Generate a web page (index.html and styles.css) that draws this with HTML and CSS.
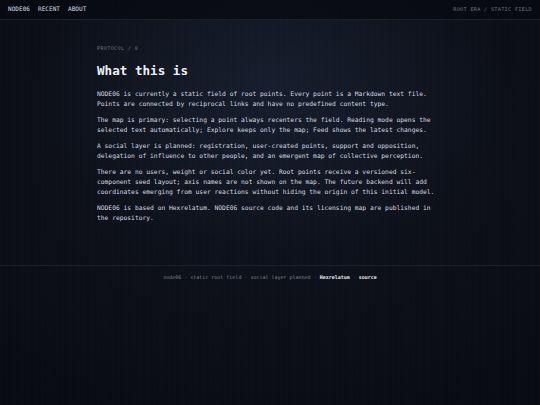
FILE: index.html
```html
<!DOCTYPE html>
<html lang="en">
<head>
<meta charset="utf-8">
<title>NODE06 — What this is</title>
<link rel="stylesheet" href="styles.css">
</head>
<body>
<header class="topbar">
  <nav class="nav">
    <a class="nav-link" href="#">NODE06</a>
    <a class="nav-link" href="#">RECENT</a>
    <a class="nav-link" href="#">ABOUT</a>
  </nav>
  <div class="era">ROOT ERA / STATIC FIELD</div>
</header>
<main class="main">
  <article class="doc">
    <div class="kicker">PROTOCOL / 0</div>
    <h1 class="title">What this is</h1>
    <p class="para">NODE06 is currently a static field of root points. Every point is a Markdown text file. Points are connected by reciprocal links and have no predefined content type.</p>
    <p class="para">The map is primary: selecting a point always recenters the field. Reading mode opens the selected text automatically; Explore keeps only the map; Feed shows the latest changes.</p>
    <p class="para">A social layer is planned: registration, user-created points, support and opposition, delegation of influence to other people, and an emergent map of collective perception.</p>
    <p class="para">There are no users, weight or social color yet. Root points receive a versioned six-component seed layout; axis names are not shown on the map. The future backend will add coordinates emerging from user reactions without hiding the origin of this initial model.</p>
    <p class="para">NODE06 is based on Hexrelatum. NODE06 source code and its licensing map are published in the repository.</p>
  </article>
</main>
<footer class="footer">
  <span>node06</span><span class="sep">·</span><span>static root field</span><span class="sep">·</span><span>social layer planned</span><span class="sep">·</span><a class="foot-link" href="#">Hexrelatum</a><span class="sep">·</span><a class="foot-link" href="#">source</a>
</footer>
</body>
</html>
```
FILE: styles.css
```css
html, body {
  margin: 0;
  padding: 0;
}
body {
  min-height: 405px;
  background-color: #090b12;
  background-image:
    repeating-linear-gradient(90deg, rgba(255, 255, 255, 0.008) 0 1px, rgba(0, 0, 0, 0) 1px 7px),
    radial-gradient(ellipse 240px 170px at 270px 80px, rgba(30, 40, 60, 0.5), rgba(20, 26, 40, 0) 100%),
    radial-gradient(ellipse 440px 320px at 270px 150px, rgba(22, 28, 42, 0.6), rgba(10, 12, 19, 0) 100%);
  color: #d9dee7;
  font-family: "DejaVu Sans Mono", "Liberation Mono", monospace;
}
a {
  color: inherit;
  text-decoration: none;
}
.topbar {
  height: 20px;
  box-sizing: border-box;
  display: flex;
  align-items: center;
  justify-content: space-between;
  padding: 0 8px 1px 8px;
  background: rgba(8, 10, 16, 0.75);
  border-bottom: 1px solid #1b2030;
}
.nav {
  display: flex;
  gap: 8px;
}
.nav-link {
  font-size: 6.1px;
  color: #d6dbe3;
  line-height: 8px;
}
.era {
  font-size: 5.2px;
  letter-spacing: 0.3px;
  color: #6c7381;
  line-height: 8px;
}
.main {
  padding: 25px 0 42px;
}
.doc {
  width: 346px;
  margin: 0 auto;
}
.kicker {
  font-size: 5.2px;
  letter-spacing: 0.3px;
  color: #6a717f;
  line-height: 7px;
}
.title {
  margin: 11px 0 11px;
  font-size: 12.6px;
  line-height: 15px;
  font-weight: bold;
  color: #eceff4;
}
.para {
  margin: 0 0 6px;
  font-size: 6.3px;
  line-height: 10px;
  color: #d3d8e1;
}
.para:last-child {
  margin-bottom: 0;
}
.footer {
  border-top: 1px solid #1b2030;
  padding: 8px 0;
  display: flex;
  justify-content: center;
  font-size: 5px;
  line-height: 7px;
  color: #7a8190;
}
.sep {
  padding: 0 3px;
  color: #575e6c;
}
.foot-link {
  color: #e6e9ee;
  font-weight: bold;
}
```
